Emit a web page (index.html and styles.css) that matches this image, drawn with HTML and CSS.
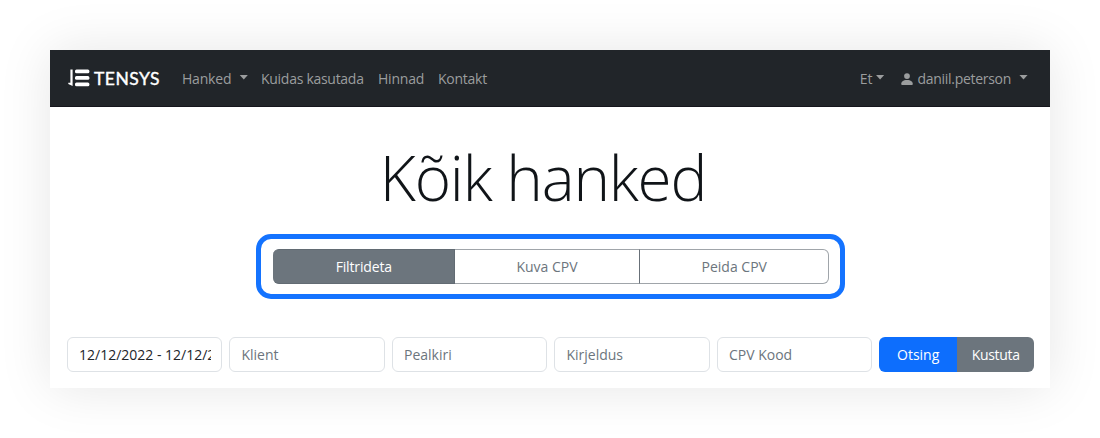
FILE: index.html
```
<!DOCTYPE html>
<html lang="et">
<head>
<meta charset="utf-8">
<title>Kõik hanked</title>
<link rel="stylesheet" href="styles.css">
</head>
<body>
<div class="window">
  <header class="navbar">
    <a class="brand">
      <svg class="brand-mark" width="22" height="18" viewBox="0 0 22 18"><path d="M2.4 0.5H4.6V17L0.3 15V13.7H2.4Z"/><rect x="7" y="0.5" width="14.4" height="3.7" rx="1.5"/><rect x="7" y="7" width="14.4" height="3.7" rx="1.5"/><rect x="7" y="13.5" width="14.4" height="3.7" rx="1.5"/></svg>
      <span class="brand-name">TENSYS</span>
    </a>
    <nav class="links">
      <a class="link hanked">Hanked<i class="caret"></i></a>
      <a class="link guide">Kuidas kasutada</a>
      <a class="link prices">Hinnad</a>
      <a class="link contact">Kontakt</a>
    </nav>
    <div class="account">
      <a class="link language">Et<i class="caret"></i></a>
      <a class="link user"><svg class="user-icon" width="12" height="12" viewBox="0 0 12 12"><circle cx="6" cy="3.1" r="2.9"/><path d="M1.1 12Q0.2 12 0.2 11C0.2 8.7 2 7 6 7S11.8 8.7 11.8 11Q11.8 12 10.9 12Z"/></svg><span class="user-name">daniil.peterson</span><i class="caret"></i></a>
    </div>
  </header>
  <main class="content">
    <h1 class="title">Kõik hanked</h1>
    <div class="highlight">
      <div class="toggle">
        <button class="option active">Filtrideta</button>
        <button class="option">Kuva CPV</button>
        <button class="option">Peida CPV</button>
      </div>
    </div>
    <form class="filters">
      <div class="field dates"><span class="clip">12/12/2022 - 12/12/2022</span></div>
      <div class="field">Klient</div>
      <div class="field">Pealkiri</div>
      <div class="field">Kirjeldus</div>
      <div class="field">CPV Kood</div>
      <div class="actions">
        <button class="action search" type="button">Otsing</button>
        <button class="action clear" type="button">Kustuta</button>
      </div>
    </form>
  </main>
</div>
</body>
</html>
```
FILE: styles.css
```
* { box-sizing: border-box; }
body {
  margin: 0;
  height: 438px;
  padding: 50px;
  overflow: hidden;
  background: #fff;
  font: 14px/20px "Open Sans", "Noto Sans", sans-serif;
}
button { font: inherit; margin: 0; padding: 0; }
.window {
  height: 338px;
  background: #fff;
  box-shadow: 0 0 50px rgba(0, 0, 0, 0.1);
}
.navbar {
  display: flex;
  align-items: center;
  height: 57px;
  padding: 1px 22px 0 18px;
  background: #212529;
  border-bottom: 1px solid #15151c;
}
.brand { display: flex; align-items: center; gap: 4px; width: 114px; }
.brand-mark { fill: #fff; margin-top: -2px; }
.brand-name {
  color: #fff;
  font: 400 17.5px/20px Lato, sans-serif;
  letter-spacing: 0.5px;
  -webkit-text-stroke: 0.4px #fff;
}
.links, .account { display: flex; }
.account { margin-left: auto; gap: 16px; }
.link { display: flex; align-items: center; color: #9b9d9e; white-space: nowrap; }
.hanked { width: 79px; letter-spacing: -0.2px; }
.guide { width: 117px; letter-spacing: -0.3px; }
.prices { width: 60px; letter-spacing: -0.2px; }
.contact { letter-spacing: -0.25px; }
.guide { letter-spacing: -0.28px; }
.user-name { letter-spacing: -0.3px; }
.caret {
  width: 9px;
  height: 5px;
  margin: -3px 0 0 8px;
  background: currentColor;
  clip-path: polygon(0 0, 100% 0, 50% 100%);
}
.language .caret { margin-left: 3px; }
.user-icon { fill: currentColor; margin-right: 5px; }
.content { display: flex; flex-direction: column; align-items: center; }
.title {
  margin: 28px 0 0;
  height: 99px;
  padding-right: 14px;
  color: #101418;
  font-size: 62px;
  line-height: 84px;
  font-weight: 300;
  letter-spacing: -1.2px;
  white-space: nowrap;
}
.highlight {
  width: 589px;
  height: 65px;
  padding: 10px 12px;
  border: 5px solid #1473ff;
  border-radius: 15px;
  margin-left: 1px;
}
.toggle { display: grid; grid-template-columns: 181.5px 185px 189.5px; height: 35px; }
.option {
  background: #fff;
  border: 1px solid #a0a5aa;
  border-left-width: 0;
  color: #6c757d;
  padding: 1px 0 0 1px;
}
.option.active { background: #6c757d; border-color: #626b73; color: #fff; border-radius: 6px 0 0 6px; letter-spacing: -0.15px; }
.option:nth-child(2) { border-right-color: #687078; }
.option:last-child { border-radius: 0 6px 6px 0; }
.filters {
  display: grid;
  grid-template-columns: repeat(6, 1fr);
  gap: 7.4px;
  width: 100%;
  height: 35px;
  margin-top: 38px;
  padding: 0 15.5px 0 17px;
}
.field {
  min-width: 0;
  padding: 7px 10.5px 6px 11px;
  border: 1px solid #dee2e6;
  border-radius: 6px;
  color: #6c757d;
  white-space: nowrap;
}
.dates { color: #212529; }
.clip { display: block; overflow: hidden; }
.actions { display: grid; grid-template-columns: 1fr 1fr; }
.action { border: 0; color: #fff; padding-top: 1px; }
.search { background: #0d6efd; border-radius: 6px 0 0 6px; }
.clear { background: #6c757d; border-radius: 0 6px 6px 0; letter-spacing: -0.3px; }
```
